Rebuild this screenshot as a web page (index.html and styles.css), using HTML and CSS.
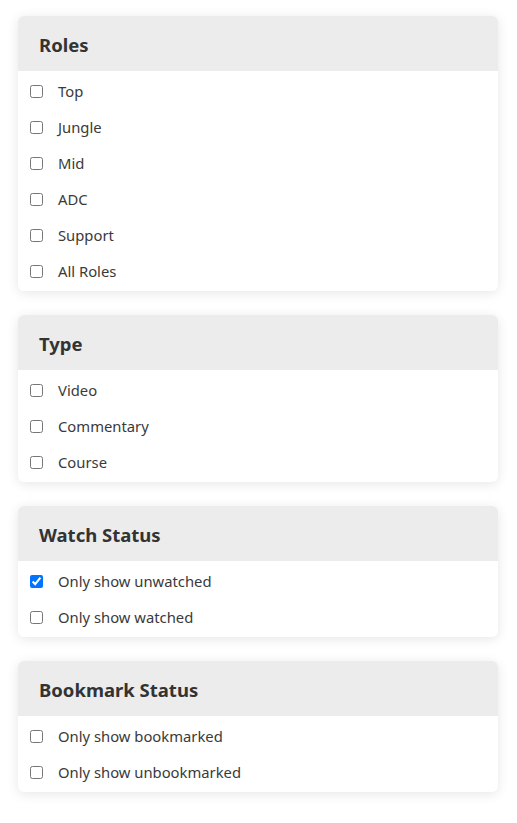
FILE: index.html
```html
<!DOCTYPE html>
<html>
<head>
<meta charset="utf-8">
<link rel="stylesheet" href="styles.css">
</head>
<body>
<div class="filters">
  <section class="card">
    <h2 class="card-title">Roles</h2>
    <div class="card-body">
      <label class="opt"><input type="checkbox"><span>Top</span></label>
      <label class="opt"><input type="checkbox"><span>Jungle</span></label>
      <label class="opt"><input type="checkbox"><span>Mid</span></label>
      <label class="opt"><input type="checkbox"><span>ADC</span></label>
      <label class="opt"><input type="checkbox"><span>Support</span></label>
      <label class="opt"><input type="checkbox"><span>All Roles</span></label>
    </div>
  </section>
  <section class="card">
    <h2 class="card-title">Type</h2>
    <div class="card-body">
      <label class="opt"><input type="checkbox"><span>Video</span></label>
      <label class="opt"><input type="checkbox"><span>Commentary</span></label>
      <label class="opt"><input type="checkbox"><span>Course</span></label>
    </div>
  </section>
  <section class="card">
    <h2 class="card-title">Watch Status</h2>
    <div class="card-body">
      <label class="opt"><input type="checkbox" checked><span>Only show unwatched</span></label>
      <label class="opt"><input type="checkbox"><span>Only show watched</span></label>
    </div>
  </section>
  <section class="card">
    <h2 class="card-title">Bookmark Status</h2>
    <div class="card-body">
      <label class="opt"><input type="checkbox"><span>Only show bookmarked</span></label>
      <label class="opt"><input type="checkbox"><span>Only show unbookmarked</span></label>
    </div>
  </section>
</div>
</body>
</html>
```

FILE: styles.css
```css
html, body {
  margin: 0;
  padding: 0;
  background: #ffffff;
}
body {
  font-family: "Noto Sans", "Open Sans", sans-serif;
  color: #333333;
}
.filters {
  width: 480px;
  padding: 16px 0 31px 18px;
  display: flex;
  flex-direction: column;
  gap: 24px;
}
.card {
  background: #ffffff;
  border-radius: 6px;
  box-shadow: 0 2px 12px rgba(0, 0, 0, 0.1);
  overflow: hidden;
}
.card-title {
  margin: 0;
  height: 55px;
  display: flex;
  align-items: center;
  padding: 1px 21px 0;
  box-sizing: border-box;
  background: #ececec;
  font-size: 18.5px;
  font-weight: 700;
  color: #333333;
}
.card-body {
  padding: 2px 0;
  display: flex;
  flex-direction: column;
}
.opt {
  height: 36px;
  display: flex;
  align-items: center;
  font-size: 14.8px;
  color: #3a3a3a;
}
.opt input {
  width: 13px;
  height: 13px;
  margin: 0 15px 0 12px;
  accent-color: #0075ff;
}
```
